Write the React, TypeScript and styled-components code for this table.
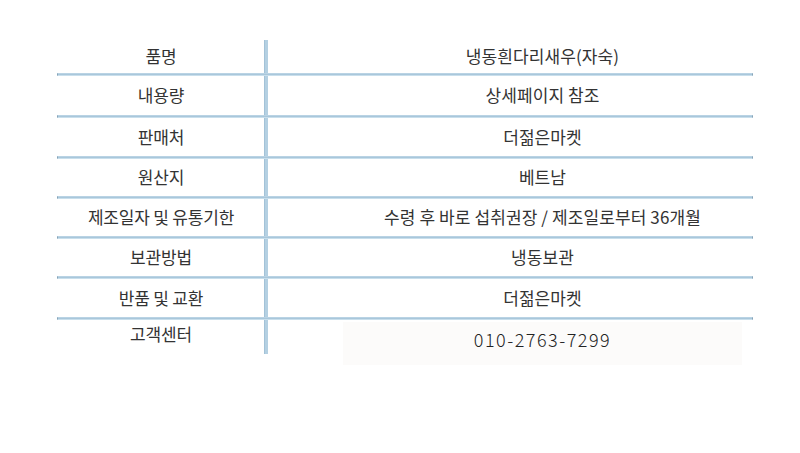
import React from 'react';
import styled, { createGlobalStyle } from 'styled-components';

interface Row {
  label: string;
  value: string;
  h: number;
}

const rows: Row[] = [
  { label: '품명', value: '냉동흰다리새우(자숙)', h: 33 },
  { label: '내용량', value: '상세페이지 참조', h: 39 },
  { label: '판매처', value: '더젊은마켓', h: 38 },
  { label: '원산지', value: '베트남', h: 37 },
  { label: '제조일자 및 유통기한', value: '수령 후 바로 섭취권장 / 제조일로부터 36개월', h: 37 },
  { label: '보관방법', value: '냉동보관', h: 37 },
  { label: '반품 및 교환', value: '더젊은마켓', h: 38 },
];

const App: React.FC = () => {
  return (
    <>
      <GlobalStyle />
      <Page>
        <Table>
          {rows.map((row) => (
            <React.Fragment key={row.label}>
              <TableRow $h={row.h}>
                <LabelCell>{row.label}</LabelCell>
                <ValueCell>
                  <ValueBox>{row.value}</ValueBox>
                </ValueCell>
              </TableRow>
              <Divider />
            </React.Fragment>
          ))}
          <LastRow>
            <LabelCell $last>고객센터</LabelCell>
            <ValueCell>
              <PhoneBox>010-2763-7299</PhoneBox>
            </ValueCell>
          </LastRow>
        </Table>
      </Page>
    </>
  );
};

const GlobalStyle = createGlobalStyle`
  html, body {
    margin: 0;
    padding: 0;
    background: #ffffff;
  }
  body {
    font-family: "Noto Sans CJK KR", "Noto Sans", sans-serif;
    color: #333333;
  }
`;

const Page = styled.div`
  width: 800px;
  height: 453px;
  padding: 40px 0 0 57px;
  box-sizing: border-box;
`;

const Table = styled.div`
  width: 696px;
  display: flex;
  flex-direction: column;
`;

const TableRow = styled.div<{ $h: number }>`
  display: flex;
  height: ${({ $h }) => $h}px;
`;

const LastRow = styled.div`
  display: flex;
  align-items: flex-start;
`;

const LabelCell = styled.div<{ $last?: boolean }>`
  width: 208px;
  flex-shrink: 0;
  display: flex;
  justify-content: center;
  align-items: ${({ $last }) => ($last ? 'flex-start' : 'center')};
  align-self: ${({ $last }) => ($last ? 'flex-start' : 'stretch')};
  height: ${({ $last }) => ($last ? '33px' : 'auto')};
  padding-top: ${({ $last }) => ($last ? '1px' : '0')};
  padding-bottom: ${({ $last }) => ($last ? '0' : '2px')};
  border-right: 3px solid #b4d0e2;
  box-shadow: inset -1px 0 0 #a3c2d7;
  font-size: 17px;
  color: #333333;
  letter-spacing: -0.2px;
`;

const ValueCell = styled.div`
  flex: 1;
  display: flex;
  align-items: center;
  padding: 0 11px 2px 75px;
`;

const ValueBox = styled.div`
  flex: 1;
  text-align: center;
  font-size: 17px;
  color: #333333;
  letter-spacing: 0.1px;
`;

const PhoneBox = styled.div`
  flex: 1;
  height: 43px;
  margin-top: 2px;
  background: #fcfbfa;
  display: flex;
  align-items: flex-start;
  justify-content: center;
  padding-top: 4px;
  box-sizing: border-box;
  font-size: 18px;
  font-weight: 300;
  letter-spacing: 1.5px;
  color: #222222;
`;

const Divider = styled.div`
  height: 3px;
  box-sizing: border-box;
  background: #a9c7db;
  border-top: 1px solid #b9d3e4;
  border-bottom: 1px solid #c9dfec;
  border-left: 1px solid #8aa4b6;
  border-right: 1px solid #8aa4b6;
`;

export default App;
